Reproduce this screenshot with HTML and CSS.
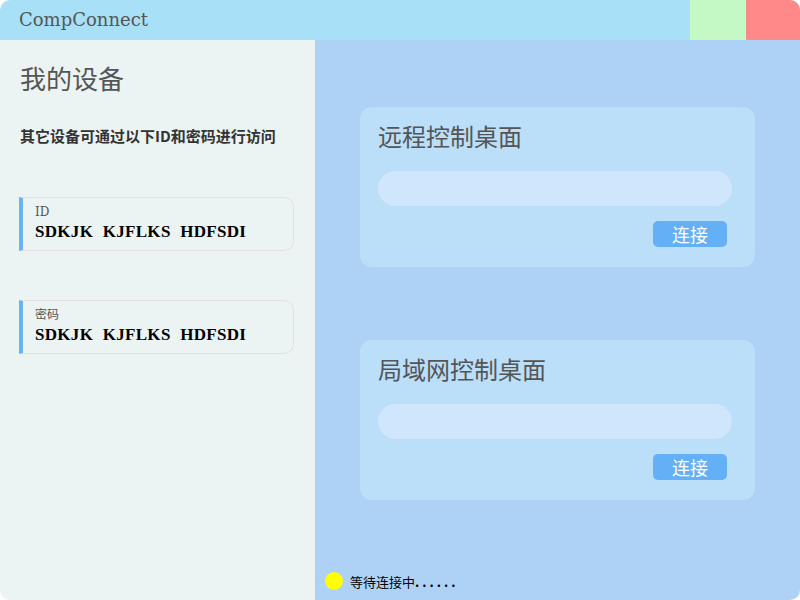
FILE: index.html
```html
<!DOCTYPE html>
<html lang="zh">
<head>
<meta charset="utf-8">
<title>CompConnect</title>
<link rel="stylesheet" href="styles.css">
</head>
<body>
<div class="window">
  <header class="titlebar">
    <div class="app-title">CompConnect</div>
    <div class="win-btns">
      <div class="win-btn btn-max"></div>
      <div class="win-btn btn-close"></div>
    </div>
  </header>
  <main class="main">
    <section class="left">
      <h1 class="heading">我的设备</h1>
      <p class="subtitle">其它设备可通过以下ID和密码进行访问</p>
      <div class="info-card">
        <div class="info-label">ID</div>
        <div class="info-value">SDKJK KJFLKS HDFSDI</div>
      </div>
      <div class="info-card">
        <div class="info-label">密码</div>
        <div class="info-value">SDKJK KJFLKS HDFSDI</div>
      </div>
    </section>
    <section class="right">
      <div class="card">
        <h2 class="card-title">远程控制桌面</h2>
        <div class="card-input"></div>
        <div class="card-actions"><button class="connect">连接</button></div>
      </div>
      <div class="card card-second">
        <h2 class="card-title">局域网控制桌面</h2>
        <div class="card-input"></div>
        <div class="card-actions"><button class="connect">连接</button></div>
      </div>
      <div class="status">
        <span class="status-dot"></span>
        <span class="status-text">等待连接中<span class="dots">......</span></span>
      </div>
    </section>
  </main>
</div>
</body>
</html>
```
FILE: styles.css
```css
* { box-sizing: border-box; }
html, body { margin: 0; padding: 0; background: #ffffff; }
body { font-family: "Noto Sans CJK SC", "Noto Sans", sans-serif; }

.window {
  width: 800px;
  height: 600px;
  border-radius: 10px;
  overflow: hidden;
  display: flex;
  flex-direction: column;
}

.titlebar {
  height: 40px;
  background: #a8e0f8;
  display: flex;
  align-items: stretch;
  justify-content: space-between;
}
.app-title {
  font-family: "DejaVu Serif", serif;
  font-size: 18px;
  color: #555555;
  padding-left: 19px;
  line-height: 40px;
}
.win-btns { display: flex; }
.win-btn { width: 56px; height: 40px; }
.btn-max { background: #c4f8c4; }
.btn-close { width: 54px; background: #ff8888; }

.main {
  flex: 1;
  display: flex;
}

.left {
  width: 315px;
  background: #ebf3f3;
  padding: 20px 21px 0 19px;
}
.heading {
  margin: 0 0 0 1px;
  font-weight: 400;
  font-size: 26px;
  line-height: 36px;
  color: #555555;
}
.subtitle {
  margin: 30px 0 0 1px;
  font-weight: 700;
  font-size: 15px;
  line-height: 20px;
  color: #333333;
}
.info-card {
  margin-top: 49px;
  height: 54px;
  border: 1px solid #e6e0e4;
  border-left: 4px solid #64b5f6;
  border-radius: 0 10px 10px 0;
  padding: 6px 0 0 12px;
}
.subtitle + .info-card { margin-top: 51px; }
.info-label {
  font-family: "DejaVu Serif", "Noto Sans CJK SC", serif;
  font-size: 12px;
  line-height: 16px;
  color: #555555;
}
.info-value {
  font-family: "Liberation Serif", serif;
  font-weight: 700;
  font-size: 17px;
  letter-spacing: 0.3px;
  word-spacing: 5px;
  line-height: 24px;
  color: #000000;
}

.right {
  flex: 1;
  background: #aed2f5;
  padding: 67px 45px 0 45px;
  display: flex;
  flex-direction: column;
}
.card {
  height: 160px;
  background: #bbdef9;
  border-radius: 12px;
  padding: 13px 23px 0 18px;
}
.card-second { margin-top: 73px; }
.card-title {
  margin: 0;
  font-weight: 400;
  font-size: 24px;
  line-height: 32px;
  color: #555555;
}
.card-input {
  margin-top: 19px;
  height: 35px;
  background: #d0e6fd;
  border-radius: 18px;
}
.card-actions {
  display: flex;
  justify-content: flex-end;
  margin-top: 15px;
  padding-right: 5px;
}
.connect {
  width: 74px;
  height: 26px;
  border: none;
  border-radius: 5px;
  background: #64b0f6;
  color: #ffffff;
  font-family: "Noto Sans CJK SC", sans-serif;
  font-size: 18px;
  line-height: 26px;
  padding: 0;
}

.status {
  margin-top: auto;
  margin-left: -35px;
  height: 38px;
  display: flex;
  align-items: center;
  gap: 7px;
}
.status-dot {
  width: 18px;
  height: 18px;
  border-radius: 50%;
  background: #ffff00;
}
.status-text {
  font-size: 13px;
  color: #000000;
}
.dots {
  font-weight: 700;
  letter-spacing: 3px;
}
```
